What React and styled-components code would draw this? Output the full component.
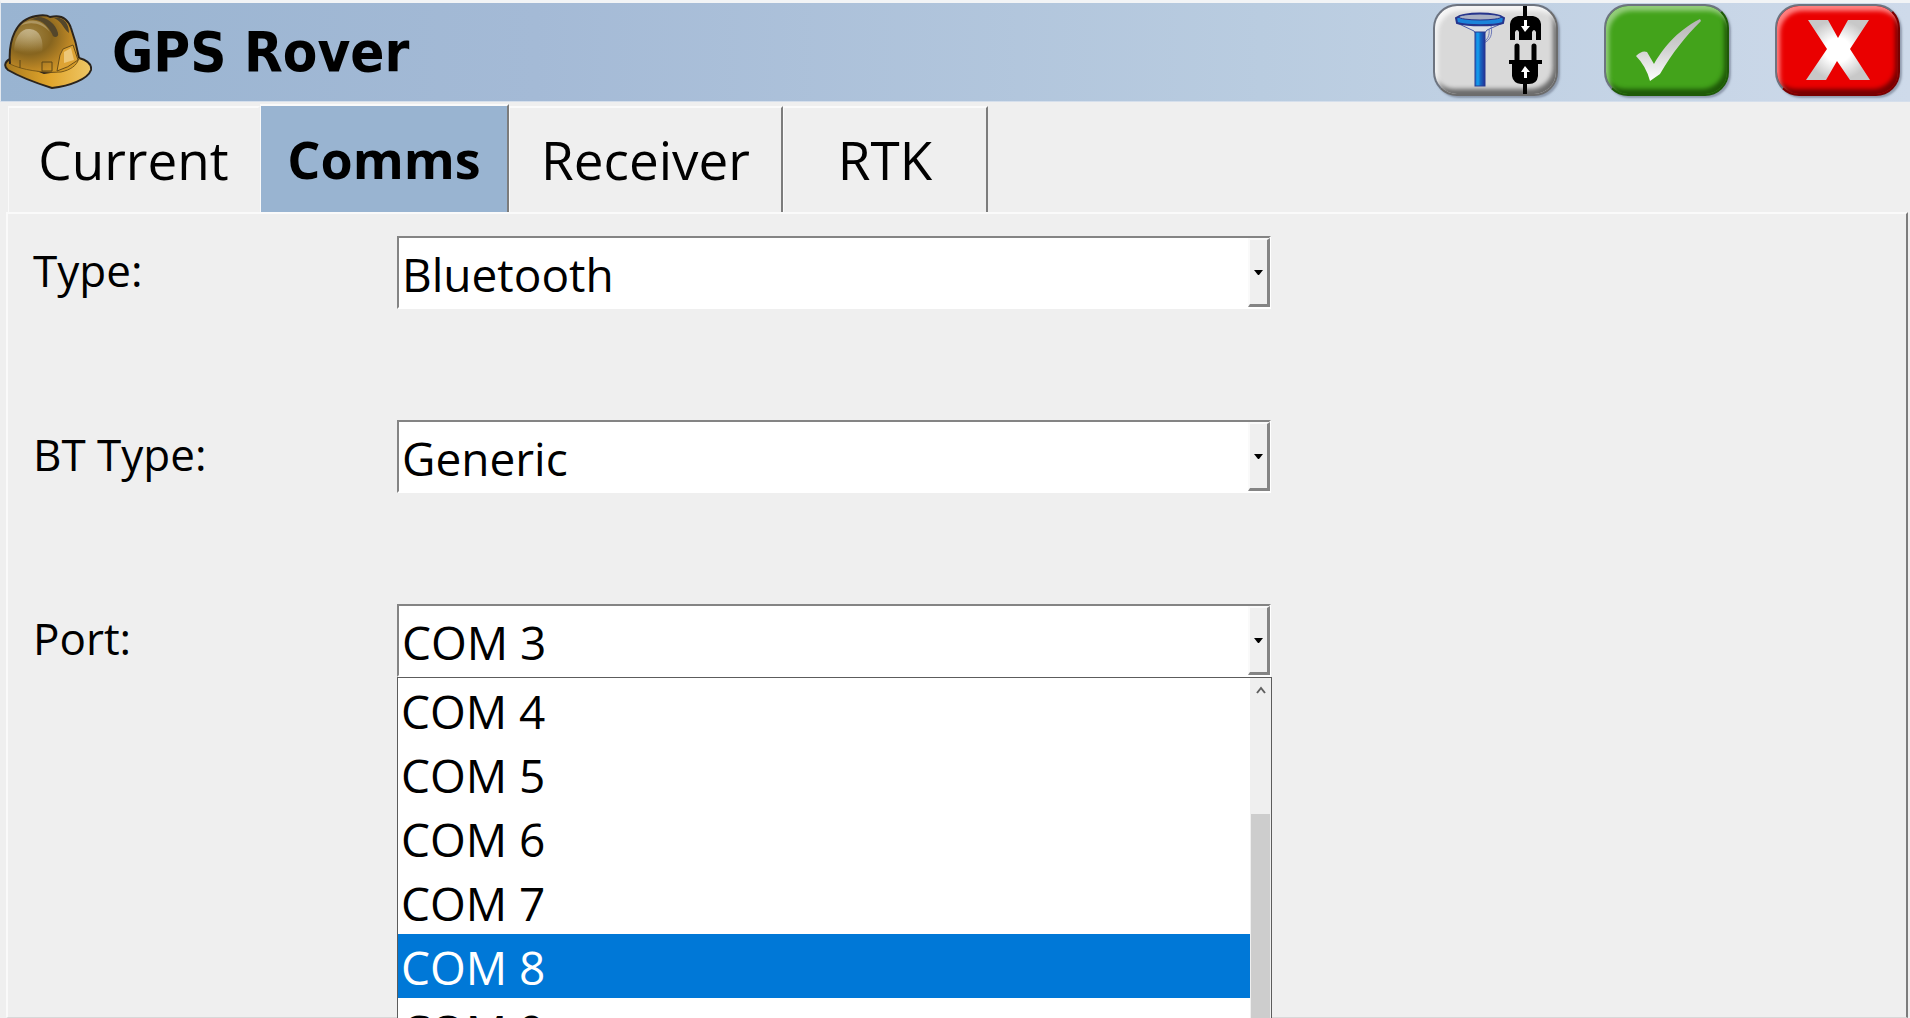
import React, { useState } from "react";
import styled, { createGlobalStyle, css } from "styled-components";

const GlobalStyle = createGlobalStyle`
  * { box-sizing: border-box; }
  body {
    margin: 0;
    background: #efefef;
    color: #000;
    font-family: "Open Sans", "Noto Sans", sans-serif;
  }
`;

const Shell = styled.div`
  height: 100vh;
  display: flex;
  flex-direction: column;
  overflow: hidden;
  background: #efefef;
`;

const TitleBar = styled.header`
  display: flex;
  align-items: center;
  height: 102px;
  flex: none;
  padding: 0 10px 0 3px;
  border-top: 3px solid #f2f4f6;
  border-left: 1px solid #e4e9ef;
  border-bottom: 1px solid #d5dfec;
  background: linear-gradient(90deg, #99b4d1, #a4bad6 28%, #b9cce0 66%, #cedaea);
`;

const Title = styled.h1`
  margin: 0 auto 0 20px;
  font-family: "DejaVu Sans Condensed", "DejaVu Sans", sans-serif;
  font-size: 56px;
  line-height: 64px;
  font-weight: 700;
  white-space: nowrap;
`;

const Actions = styled.div`
  display: flex;
  align-self: flex-start;
  gap: 46px;
  padding-top: 1px;
`;

const faces = {
  grey: { base: "#d9d9d9", light: "#f6f6f6", dark: "#6c6c6c" },
  green: { base: "#43a31b", light: "#93cd7a", dark: "#1f5a08" },
  red: { base: "#ea0000", light: "#ff8080", dark: "#780000" },
};

const ActionButton = styled.button`
  width: 125px;
  height: 92px;
  padding: 0;
  border: 2px solid #6d7480;
  border-right-color: ${(p) => faces[p.$face].dark};
  border-bottom-color: ${(p) => faces[p.$face].dark};
  border-radius: 24px;
  background: ${(p) => faces[p.$face].base};
  box-shadow:
    inset 3px 5px 4px ${(p) => faces[p.$face].light},
    inset -3px -5px 4px ${(p) => faces[p.$face].dark},
    2px 2px 2px rgba(90, 100, 120, 0.5);
  svg { display: block; width: 121px; height: 88px; }
`;

const Tabs = styled.div`
  display: flex;
  align-items: flex-end;
  flex: none;
  height: 110px;
  padding: 0 8px;
`;

const Tab = styled.button`
  width: ${(p) => p.$width}px;
  height: 106px;
  padding: 0;
  border: 0 solid;
  border-width: 2px 2px 0 1px;
  border-color: #fafafa #7c7c7c #fafafa #fafafa;
  background: #efefef;
  color: #000;
  font: 400 53px/72px "Open Sans", sans-serif;
  ${(p) => p.$plain && css`border-right-color: #efefef;`}
  ${(p) => p.$active && css`
    height: 108px;
    background: #99b4d1;
    font-size: 52px;
    font-weight: 700;
  `}
`;

const Panel = styled.section`
  flex: 1;
  min-height: 0;
  margin: 0 2px 0 6px;
  padding: 22px 24px 0;
  border: 2px solid #fafafa;
  border-right-color: #7c7c7c;
  border-bottom: 1px solid #d8d8d8;
`;

const Form = styled.form`
  display: grid;
  gap: 111px;
`;

const Row = styled.div`
  display: grid;
  grid-template-columns: 365px minmax(0, 874px);
`;

const Label = styled.label`
  padding-left: 1px;
  font-size: 44px;
  line-height: 68px;
  white-space: nowrap;
`;

const Field = styled.div`
  position: relative;
  height: 73px;
`;

const Select = styled.select`
  appearance: none;
  display: block;
  width: 100%;
  height: 73px;
  padding: 2px 24px 0 3px;
  border: 2px solid #fff;
  border-top-color: #848484;
  border-left-color: #848484;
  border-radius: 0;
  background: #fff;
  color: #000;
  font: 400 46px/68px "Open Sans", sans-serif;
  outline: 0;
`;

const Arrow = styled.span`
  position: absolute;
  top: 2px;
  right: 1px;
  width: 22px;
  height: 69px;
  display: grid;
  place-items: center;
  border: 2px solid #fafafa;
  border-right: 3px solid #848484;
  border-bottom: 3px solid #848484;
  background: #efefef;
  pointer-events: none;
`;

const Popup = styled.div`
  position: absolute;
  z-index: 1;
  top: 73px;
  left: 0;
  right: -1px;
  display: flex;
  border: 1px solid #5c5c5c;
  background: #fff;
`;

const Options = styled.ul`
  flex: 1;
  margin: 0;
  padding: 0;
  list-style: none;
`;

const Option = styled.li`
  height: 64px;
  padding: 0 3px;
  font-size: 46px;
  line-height: 66px;
  cursor: default;
  color: ${(p) => (p.$selected ? "#fff" : "#000")};
  background: ${(p) => (p.$selected ? "#0078d7" : "#fff")};
`;

const Track = styled.div`
  width: 21px;
  display: flex;
  flex-direction: column;
  align-items: center;
  background: #efefef;
  svg { flex: none; margin: 8px 0 0; }
`;

const Thumb = styled.div`
  flex: 1;
  width: 19px;
  margin-top: 120px;
  background: #cdcdcd;
`;

function Helmet() {
  return (
    <svg width="88" height="76" viewBox="0 0 88 76" aria-hidden="true">
      <defs>
        <radialGradient id="dome" cx="0.28" cy="0.35" r="0.75">
          <stop offset="0" stopColor="#a08545" />
          <stop offset="0.45" stopColor="#87651f" />
          <stop offset="0.8" stopColor="#bd8725" />
          <stop offset="1" stopColor="#d39a28" />
        </radialGradient>
        <linearGradient id="brim" x1="0" y1="0" x2="1" y2="0">
          <stop offset="0" stopColor="#a87a20" />
          <stop offset="0.5" stopColor="#e0a42a" />
          <stop offset="1" stopColor="#efc766" />
        </linearGradient>
        <linearGradient id="sheen" x1="0" y1="0" x2="0" y2="1">
          <stop offset="0" stopColor="#e8dfc6" stopOpacity="0.55" />
          <stop offset="1" stopColor="#e8dfc6" stopOpacity="0" />
        </linearGradient>
      </defs>
      <path d="M6 45C0 48 0 53 4 56C16 63 32 69 48 74C66 72 84 65 87 56C88 50 82 46 75 44L60 56L40 59Z" fill="url(#brim)" stroke="#2b241c" strokeWidth="2" />
      <path d="M6 50C4 26 12 5 32 2C38 1 43 1 46 3C58 0 64 5 67 14C71 25 73 33 75 44C73 52 66 56 57 58C38 59 18 56 6 50Z" fill="url(#dome)" />
      <path d="M6 50C4 26 12 5 32 2C38 1 43 1 46 3C58 0 64 5 67 14C71 25 73 33 75 44" fill="none" stroke="#2b241c" strokeWidth="2" />
      <path d="M6 50C18 56 38 59 57 58C66 56 73 52 75 44" fill="none" stroke="#7c5a17" />
      <path d="M25 6C37 3 46 14 49 22C51 24 55 23 54 19C52 10 43 3 34 3ZM50 4C58 7 60 16 65 19C65 9 59 2 50 4Z" fill="#54462a" />
      <path d="M10 38C10 22 18 14 26 15C36 16 40 26 38 38Z" fill="url(#sheen)" />
      <path d="M16 12C24 4 38 4 46 18C38 9 26 7 16 12Z" fill="#e8dfc6" opacity="0.35" />
      <path d="M53 57L56 41L59 35L69 31L74 46Q64 54 53 57Z" fill="#dda334" stroke="#6a4e18" />
      <path d="M60 38L67 34L70 46L60 49Z" fill="#edc778" />
      <path d="M38 57V48H48V57ZM16 46V54" fill="none" stroke="#5d4617" />
    </svg>
  );
}

function ReceiverIcon() {
  return (
    <svg viewBox="0 0 121 88" aria-hidden="true">
      <defs>
        <linearGradient id="pole" x1="0" y1="0" x2="1" y2="0">
          <stop offset="0" stopColor="#1a6fcc" />
          <stop offset="0.3" stopColor="#12a0f0" />
          <stop offset="0.55" stopColor="#1565c0" />
          <stop offset="1" stopColor="#232f96" />
        </linearGradient>
      </defs>
      <path d="M22 17L39 25L41 28H49L52 24L68 17Z" fill="#dcdfe6" stroke="#5261a8" />
      <path d="M21 12C30 6 60 6 69 12L68 17C58 20 34 20 22 17Z" fill="#1b84da" stroke="#26348c" strokeWidth="2" />
      <ellipse cx="45" cy="11" rx="21" ry="3" fill="#a9b0c4" stroke="#26348c" />
      <path d="M54 23C55 30 52 34 48 37M56 20C58 29 55 34 49 37" fill="none" stroke="#6c78b8" />
      <rect x="40" y="26" width="10" height="54" fill="url(#pole)" stroke="#263a91" />
      <path d="M90 0V12M90 76V88" stroke="#000" strokeWidth="4" />
      <path d="M75 34V18Q76 11 83 10H98Q105 11 106 18V34H101V26Q99 22 97 26V34H84V26Q82 22 80 26V34Z" />
      <path d="M82 40V56M99 40V56" stroke="#000" strokeWidth="5" strokeLinecap="round" />
      <path d="M74 54H107V58H103V70Q102 78 94 78H86Q78 77 77 70V58H74Z" />
      <path d="M89 14H92V20H95L90 26L86 20H89ZM89 72H92V66H95L90 60L86 66H89Z" fill="#fff" />
    </svg>
  );
}

function CheckIcon() {
  return (
    <svg viewBox="0 0 121 88" aria-hidden="true">
      <defs>
        <linearGradient id="tick" x1="0" y1="0" x2="0" y2="1">
          <stop offset="0" stopColor="#b4b4b4" />
          <stop offset="0.5" stopColor="#d2d2d2" />
          <stop offset="1" stopColor="#fff" />
        </linearGradient>
      </defs>
      <path d="M30 50Q36 44 41 46L48 58C56 44 70 25 94 13L95 15C78 32 67 46 54 68L44 75Q40 60 30 50Z" fill="url(#tick)" />
    </svg>
  );
}

function CloseIcon() {
  return (
    <svg viewBox="0 0 121 88" aria-hidden="true">
      <defs>
        <radialGradient id="cross">
          <stop offset="0.4" stopColor="#fff" />
          <stop offset="1" stopColor="#c8c8c8" />
        </radialGradient>
      </defs>
      <path d="M31 14H51L61 32L71 14H92L73 43L93 74H73L60 55L49 74H29L50 43Z" fill="url(#cross)" />
    </svg>
  );
}

function DropField({ id, label, value, options, onChange, children }) {
  return (
    <Row>
      <Label htmlFor={id}>{label}</Label>
      <Field>
        <Select id={id} value={value} onChange={(e) => onChange(e.target.value)}>
          {options.map((o) => <option key={o}>{o}</option>)}
        </Select>
        <Arrow>
          <svg width="9" height="5" aria-hidden="true"><path d="M0 0H9L5 5H4Z" /></svg>
        </Arrow>
        {children}
      </Field>
    </Row>
  );
}

const tabs = [
  { name: "Current", width: 252, plain: true },
  { name: "Comms", width: 249 },
  { name: "Receiver", width: 274 },
  { name: "RTK", width: 205 },
];
const listed = ["COM 4", "COM 5", "COM 6", "COM 7", "COM 8", "COM 9"];

export default function App() {
  const [tab, setTab] = useState("Comms");
  const [type, setType] = useState("Bluetooth");
  const [btType, setBtType] = useState("Generic");
  const [port, setPort] = useState("COM 3");
  const [hovered, setHovered] = useState("COM 8");

  return (
    <Shell>
      <GlobalStyle />
      <TitleBar>
        <Helmet />
        <Title>GPS Rover</Title>
        <Actions>
          <ActionButton $face="grey" aria-label="Connect receiver"><ReceiverIcon /></ActionButton>
          <ActionButton $face="green" aria-label="Accept"><CheckIcon /></ActionButton>
          <ActionButton $face="red" aria-label="Close"><CloseIcon /></ActionButton>
        </Actions>
      </TitleBar>
      <Tabs role="tablist">
        {tabs.map((t) => (
          <Tab key={t.name} role="tab" aria-selected={tab === t.name} $width={t.width} $plain={t.plain} $active={tab === t.name} onClick={() => setTab(t.name)}>
            {t.name}
          </Tab>
        ))}
      </Tabs>
      <Panel>
        <Form>
          <DropField id="type" label="Type:" value={type} options={["Bluetooth"]} onChange={setType} />
          <DropField id="bt-type" label="BT Type:" value={btType} options={["Generic"]} onChange={setBtType} />
          <DropField id="port" label="Port:" value={port} options={["COM 3", ...listed]} onChange={setPort}>
            <Popup>
              <Options role="listbox" aria-label="Port">
                {listed.map((o) => (
                  <Option key={o} role="option" aria-selected={o === hovered} $selected={o === hovered} onMouseEnter={() => setHovered(o)} onClick={() => setPort(o)}>
                    {o}
                  </Option>
                ))}
              </Options>
              <Track>
                <svg width="10" height="8" aria-hidden="true"><path d="M1 7L5 2L9 7" fill="none" stroke="#606060" strokeWidth="2" /></svg>
                <Thumb />
              </Track>
            </Popup>
          </DropField>
        </Form>
      </Panel>
    </Shell>
  );
}
